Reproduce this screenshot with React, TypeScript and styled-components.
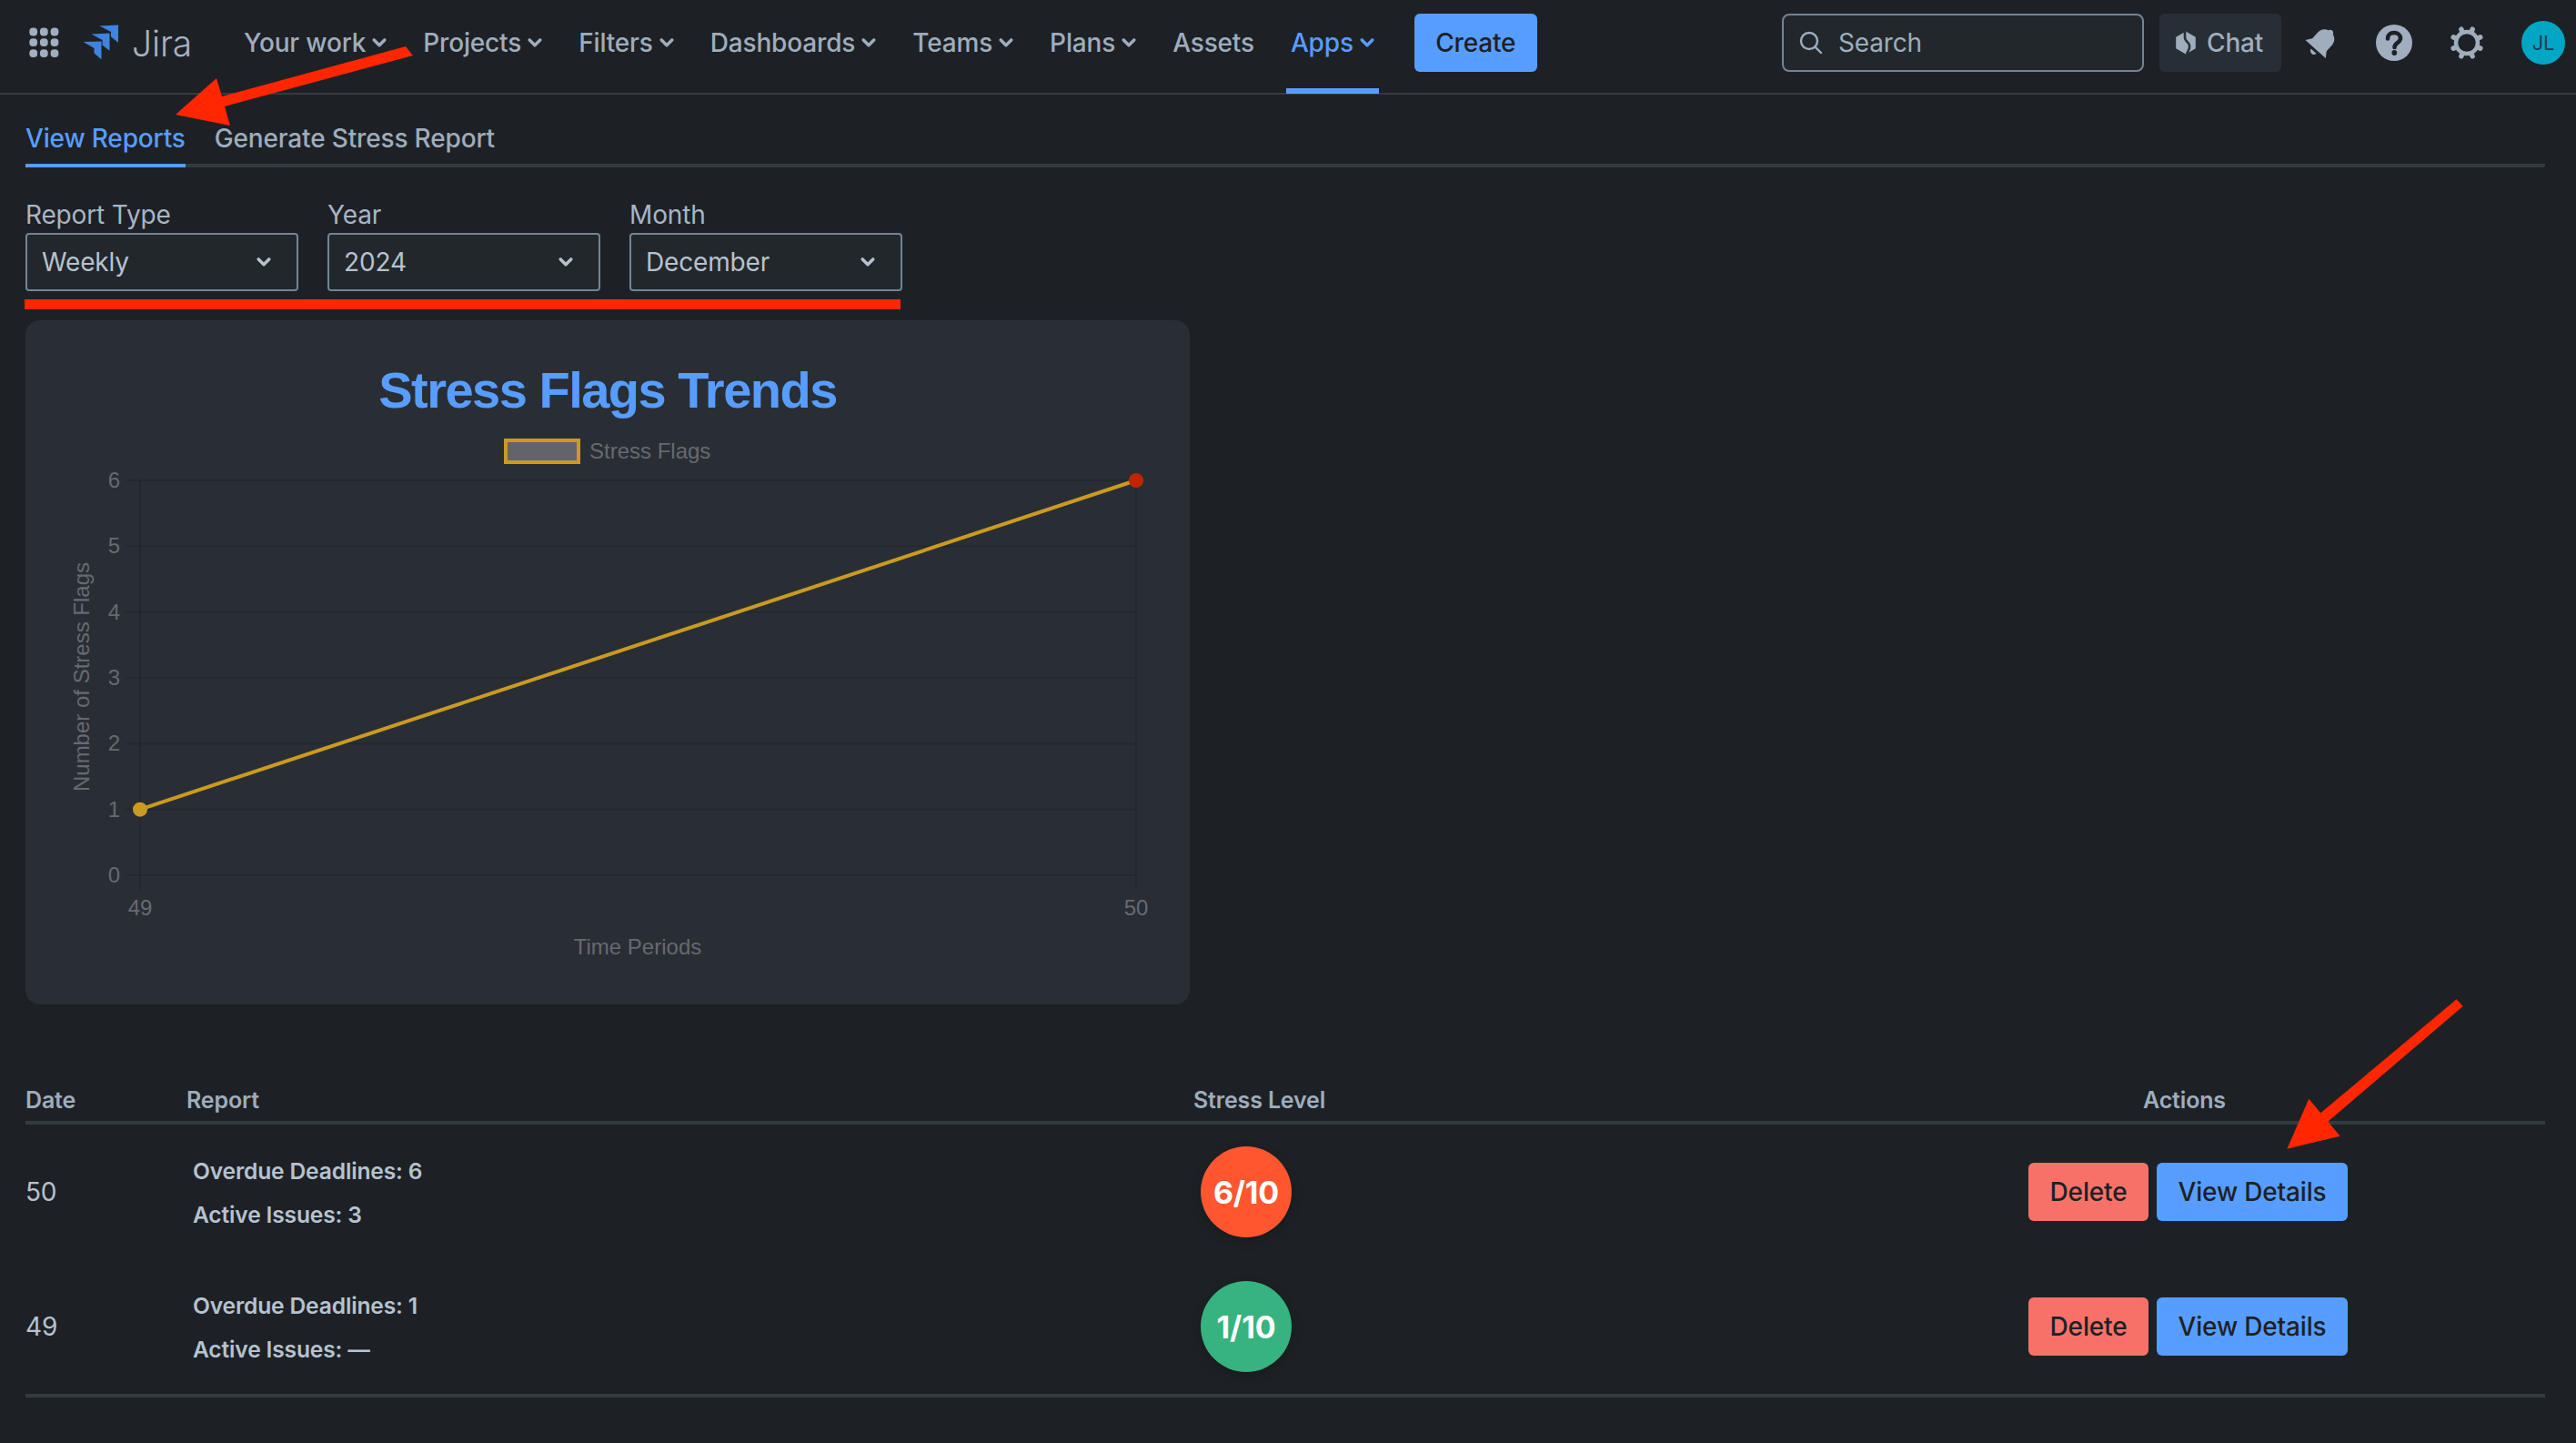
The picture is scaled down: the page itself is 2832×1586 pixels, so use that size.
import React from "react";
import styled, { createGlobalStyle } from "styled-components";

const Global = createGlobalStyle`
  html, body { margin: 0; padding: 0; background: #1d2125; overflow: hidden; }
  body { font-family: Inter, "Liberation Sans", sans-serif; color: #b6c2cf; letter-spacing: -0.16px; }
  * { box-sizing: border-box; }
`;

const Page = styled.div`
  position: relative;
  width: 2832px;
  height: 1586px;
  background: #1d2125;
  overflow: hidden;
`;

const TopBar = styled.header`
  height: 104px;
  display: flex;
  align-items: center;
  padding: 0 12px 8px 30px;
  border-bottom: 2px solid #333a41;
`;

const Logo = styled.div`
  display: flex;
  align-items: center;
  margin-left: 26px;
  gap: 13px;
  width: 171px;
`;

const LogoWord = styled.span`
  font-size: 39px;
  font-weight: 300;
  line-height: 1;
  color: #a6b3c4;
`;

const Nav = styled.nav`
  display: flex;
  align-items: center;
  gap: 30px;
`;

const NavItem = styled.div<{ $active?: boolean }>`
  position: relative;
  height: 40px;
  padding: 0 5px;
  display: flex;
  align-items: center;
  gap: 7px;
  font-size: 28px;
  font-weight: 500;
  white-space: nowrap;
  color: ${(p) => (p.$active ? "#579dff" : "#9fadbc")};
  ${(p) =>
    p.$active &&
    `&::after { content: ""; position: absolute; left: 0; right: 0; bottom: -36px; height: 6px; background: #579dff; }`}
`;

const CreateButton = styled.button`
  height: 64px;
  width: 135px;
  margin-left: 39px;
  border: 0;
  border-radius: 6px;
  background: #579dff;
  color: #1d2125;
  font: 500 28px Inter, sans-serif;
  letter-spacing: -0.16px;
`;

const Right = styled.div`
  margin-left: auto;
  display: flex;
  align-items: center;
`;

const SearchBox = styled.div`
  width: 398px;
  height: 64px;
  display: flex;
  align-items: center;
  gap: 17px;
  padding-left: 17px;
  margin-right: 17px;
  border: 2px solid #738496;
  border-radius: 8px;
  background: #22272b;
  color: #9fadbc;
  font-size: 28px;
`;

const ChatButton = styled.div`
  width: 134px;
  height: 64px;
  margin-right: 4px;
  display: flex;
  align-items: center;
  gap: 11px;
  padding-left: 17px;
  border-radius: 6px;
  background: #282e36;
  color: #9fadbc;
  font-size: 28px;
  font-weight: 500;
`;

const IconSlot = styled.div`
  width: 80px;
  height: 64px;
  display: flex;
  align-items: center;
  justify-content: center;
`;

const Avatar = styled.div`
  width: 48px;
  height: 48px;
  margin-left: 20px;
  border-radius: 50%;
  background: #00a6c3;
  color: #253858;
  font-size: 22px;
  display: flex;
  align-items: center;
  justify-content: center;
`;

const Main = styled.main`
  padding: 0 34px 0 28px;
`;

const TabBar = styled.div`
  display: flex;
  gap: 32px;
  padding-top: 24px;
  border-bottom: 4px solid #333a41;
  border-radius: 0 0 2px 2px;
`;

const Tab = styled.div<{ $active?: boolean }>`
  font-size: 28px;
  font-weight: 500;
  line-height: 48px;
  padding-bottom: 4px;
  margin-bottom: -4px;
  border-bottom: 4px solid ${(p) => (p.$active ? "#579dff" : "transparent")};
  color: ${(p) => (p.$active ? "#579dff" : "#9fadbc")};
`;

const Filters = styled.div`
  display: flex;
  gap: 32px;
  margin-top: 36px;
`;

const Field = styled.div`
  display: flex;
  flex-direction: column;
  gap: 4px;
`;

const FieldLabel = styled.label`
  font-size: 28px;
  line-height: 32px;
  color: #a8b5c4;
`;

const Select = styled.div`
  width: 300px;
  height: 64px;
  display: flex;
  align-items: center;
  justify-content: space-between;
  padding: 0 28px 0 16px;
  border: 2px solid #738496;
  border-radius: 4px;
  background: #22272b;
  color: #b6c2cf;
  font-size: 28px;
`;

const ChartCard = styled.section`
  width: 1280px;
  height: 752px;
  margin-top: 32px;
  border-radius: 16px;
  background: #292e35;
  overflow: hidden;
`;

const Table = styled.div`
  margin-top: 89px;
  border-bottom: 4px solid #333a41;
`;

const HeadRow = styled.div`
  display: grid;
  grid-template-columns: 177px 1107px 693px 1fr;
  font-size: 25px;
  font-weight: 600;
  line-height: 32px;
  padding-bottom: 7px;
  color: #9fadbc;
  border-bottom: 4px solid #333a41;
`;

const BodyRow = styled.div`
  display: grid;
  grid-template-columns: 177px 1107px 693px 1fr;
  align-items: center;
  height: 148px;
`;

const HeadCell = styled.div<{ $center?: boolean }>`
  text-align: ${(p) => (p.$center ? "center" : "left")};
`;

const DateCell = styled.div`
  font-size: 28px;
  color: #b6c2cf;
`;

const ReportCell = styled.div`
  padding: 1px 0 0 7px;
  font-size: 24.600px;
  font-weight: 600;
  line-height: 32px;
  color: #b6c2cf;
  display: flex;
  flex-direction: column;
  gap: 16px;
`;

const Badge = styled.div<{ $bg: string }>`
  width: 100px;
  height: 100px;
  margin-left: 8px;
  border-radius: 50%;
  background: ${(p) => p.$bg};
  color: #fff;
  font-size: 34px;
  font-weight: 700;
  display: flex;
  align-items: center;
  justify-content: center;
  box-shadow: 0 4px 12px rgba(0, 0, 0, 0.2);
`;

const Actions = styled.div`
  display: flex;
  justify-content: center;
  gap: 9px;
  padding-left: 8px;
`;

const ActionButton = styled.button<{ $bg: string; $w: number }>`
  height: 64px;
  width: ${(p) => p.$w}px;
  border: 0;
  border-radius: 6px;
  background: ${(p) => p.$bg};
  color: #1d2125;
  font: 500 28px Inter, sans-serif;
  letter-spacing: -0.16px;
`;

const Annotations = styled.svg`
  position: absolute;
  left: 0;
  top: 0;
  pointer-events: none;
`;

const ChartSvg = styled.svg`
  display: block;
  letter-spacing: 0;
`;

const Chevron = ({ size = 16 }: { size?: number }) => (
  <svg width={size} height={size * 0.6} viewBox="0 0 16 10" fill="none">
    <path d="M2 2l6 6 6-6" stroke="currentColor" strokeWidth="3.6" strokeLinecap="round" strokeLinejoin="round" />
  </svg>
);

const GridIcon = () => (
  <svg width="36" height="36" viewBox="0 0 36 36" fill="#a1aebf" style={{ display: "block" }}>
    {[6.7, 18.3, 30].flatMap((x) =>
      [5, 16.7, 28.7].map((y) => <rect key={`${x}-${y}`} x={x - 4.4} y={y - 4.4 + 1} width="8.8" height="8.8" rx="4" />)
    )}
  </svg>
);

const JiraMark = () => (
  <svg width="40" height="40" viewBox="0 0 40 40" fill="#3f83de">
    <path d="M17.500 1.500 L38 0.500 V19 Q38 20 37 19 L30 13.500 V8 Z" />
    <path d="M8.500 10.500 L28.500 9.500 V28 Q28.500 29 27.500 28 L20.500 22.500 V17 Z" />
    <path d="M-0.500 19 L19.500 18.500 V37 Q19.500 38.500 18.500 37.500 L11.500 31.500 V26 Z" />
  </svg>
);

const SearchIcon = () => (
  <svg width="26" height="26" viewBox="0 0 26 26" fill="none" stroke="#9fadbc" strokeWidth="2.4" strokeLinecap="round">
    <circle cx="11" cy="11" r="9" />
    <path d="M17.6 17.6L24 24" />
  </svg>
);

const ChatIcon = () => (
  <svg width="24" height="26" viewBox="-12 -13 24 26">
    <path d="M0-12.5L10.8-6.2V6.2L0 12.5-10.8 6.2V-6.2Z" fill="#9fadbc" />
    <path d="M-1 -12.5L-1 -6Q-1 -3 1.5 -1T4 3V6L1 12.5" fill="none" stroke="#282e36" strokeWidth="2.6" />
  </svg>
);

const BellIcon = () => (
  <svg width="44" height="44" viewBox="0 0 44 44" fill="#9fadbc">
    <g transform="rotate(42 22 22)">
      <path d="M22 4c-1.7 0-3 1-3.300 2.600C14 8 11.500 12 11.500 17v8L7 31.500h30L32.500 25v-8c0-5-2.500-9-7.200-10.400C25 5 23.700 4 22 4z" />
      <path d="M18 34.500h8c-.6 2.300-2.100 3.500-4 3.500s-3.400-1.200-4-3.500z" />
    </g>
  </svg>
);

const HelpIcon = () => (
  <svg width="40" height="40" viewBox="0 0 40 40">
    <circle cx="20" cy="20" r="20" fill="#a1aebf" />
    <path d="M13 15.500c0-4 3-6.500 7-6.500s7 2.500 7 6c0 5-6.500 5-6.500 10" fill="none" stroke="#1d2125" strokeWidth="4.600" strokeLinecap="round" />
    <circle cx="20.300" cy="31" r="2.900" fill="#1d2125" />
  </svg>
);

const GearIcon = () => {
  const teeth = Array.from({ length: 8 }, (_, i) => i * 45);
  return (
    <svg width="40" height="40" viewBox="-20 -20 40 40" stroke="#9fadbc" fill="none">
      <circle r="12" strokeWidth="4.500" />
      {teeth.map((a) => (
        <line key={a} x1="0" x2="0" y1="-13" y2="-16" strokeWidth="5.500" strokeLinecap="round" transform={`rotate(${a + 22.5})`} />
      ))}
    </svg>
  );
};

const yAxis = { x: 126, top: 176, bottom: 610, left: 110 };
const xRight = 1221;
const tickColor = "#666a70";
const gridColor = "rgba(0,0,0,0.11)";
const toY = (v: number) => yAxis.bottom - (v / 6) * (yAxis.bottom - yAxis.top);

const StressChart = () => (
  <ChartSvg width="1280" height="752" viewBox="0 0 1280 752" fontFamily="'Liberation Sans', Arial, sans-serif">
    <text x="640" y="96" textAnchor="middle" fontSize="56" fontWeight="700" letterSpacing="-1.5" fill="#579dff">Stress Flags Trends</text>
    <rect x="528" y="132" width="80" height="24" fill="#636469" stroke="#ca9a22" strokeWidth="4" />
    <text x="620" y="152" fontSize="24" fill={tickColor}>Stress Flags</text>
    {[0, 1, 2, 3, 4, 5, 6].map((v) => (
      <g key={v}>
        <line x1={yAxis.left} x2={xRight} y1={toY(v)} y2={toY(v)} stroke={gridColor} strokeWidth="2" />
        <text x="104" y={toY(v) + 8} textAnchor="end" fontSize="24" fill={tickColor}>{v}</text>
      </g>
    ))}
    {[yAxis.x, xRight].map((x) => (
      <line key={x} x1={x} x2={x} y1={yAxis.top} y2={yAxis.bottom + 16} stroke={gridColor} strokeWidth="2" />
    ))}
    <text x={yAxis.x} y="654" textAnchor="middle" fontSize="24" fill={tickColor}>49</text>
    <text x={xRight} y="654" textAnchor="middle" fontSize="24" fill={tickColor}>50</text>
    <text x="673" y="697" textAnchor="middle" fontSize="24" fill={tickColor}>Time Periods</text>
    <text transform="translate(70 392) rotate(-90)" textAnchor="middle" fontSize="24" fill={tickColor}>Number of Stress Flags</text>
    <line x1={yAxis.x} y1={toY(1)} x2={xRight} y2={toY(6)} stroke="#ca9a22" strokeWidth="4" />
    <circle cx={yAxis.x} cy={toY(1)} r="8" fill="#ca9a22" />
    <circle cx={xRight} cy={toY(6)} r="8" fill="#bf2600" />
  </ChartSvg>
);

const navItems: { label: string; chevron: boolean; active?: boolean }[] = [
  { label: "Your work", chevron: true },
  { label: "Projects", chevron: true },
  { label: "Filters", chevron: true },
  { label: "Dashboards", chevron: true },
  { label: "Teams", chevron: true },
  { label: "Plans", chevron: true },
  { label: "Assets", chevron: false },
  { label: "Apps", chevron: true, active: true },
];

const rows = [
  { date: "50", overdue: "6", active: "3", level: "6/10", color: "#ff5630" },
  { date: "49", overdue: "1", active: "—", level: "1/10", color: "#36b37e" },
];

export default function App() {
  return (
    <Page>
      <Global />
      <TopBar>
        <GridIcon />
        <Logo>
          <JiraMark />
          <LogoWord>Jira</LogoWord>
        </Logo>
        <Nav>
          {navItems.map((n) => (
            <NavItem key={n.label} $active={n.active}>
              {n.label}
              {n.chevron && <Chevron />}
            </NavItem>
          ))}
        </Nav>
        <CreateButton>Create</CreateButton>
        <Right>
          <SearchBox>
            <SearchIcon />
            Search
          </SearchBox>
          <ChatButton>
            <ChatIcon />
            Chat
          </ChatButton>
          <IconSlot><BellIcon /></IconSlot>
          <IconSlot><HelpIcon /></IconSlot>
          <IconSlot><GearIcon /></IconSlot>
          <Avatar>JL</Avatar>
        </Right>
      </TopBar>
      <Main>
        <TabBar>
          <Tab $active>View Reports</Tab>
          <Tab>Generate Stress Report</Tab>
        </TabBar>
        <Filters>
          {[
            ["Report Type", "Weekly"],
            ["Year", "2024"],
            ["Month", "December"],
          ].map(([label, value]) => (
            <Field key={label}>
              <FieldLabel>{label}</FieldLabel>
              <Select>
                {value}
                <Chevron />
              </Select>
            </Field>
          ))}
        </Filters>
        <ChartCard>
          <StressChart />
        </ChartCard>
        <Table>
          <HeadRow>
            <HeadCell>Date</HeadCell>
            <HeadCell>Report</HeadCell>
            <HeadCell>Stress Level</HeadCell>
            <HeadCell $center>Actions</HeadCell>
          </HeadRow>
          {rows.map((r) => (
            <BodyRow key={r.date}>
              <DateCell>{r.date}</DateCell>
              <ReportCell>
                <span>Overdue Deadlines: {r.overdue}</span>
                <span>Active Issues: {r.active}</span>
              </ReportCell>
              <Badge $bg={r.color}>{r.level}</Badge>
              <Actions>
                <ActionButton $bg="#f87168" $w={132}>Delete</ActionButton>
                <ActionButton $bg="#579dff" $w={210}>View Details</ActionButton>
              </Actions>
            </BodyRow>
          ))}
        </Table>
      </Main>
      <Annotations width="2832" height="1586" viewBox="0 0 2832 1586" fill="#ff2600">
        <polygon points="446,51 454,61 247,117 253,138 193,126 238,86 244,106" />
        <rect x="27" y="329" width="963" height="11" />
        <polygon points="2700.700,1098.300 2707.700,1106 2559.300,1232.700 2572.700,1248.700 2514.300,1262.700 2538.300,1207.700 2551.300,1223.300" />
      </Annotations>
    </Page>
  );
}
